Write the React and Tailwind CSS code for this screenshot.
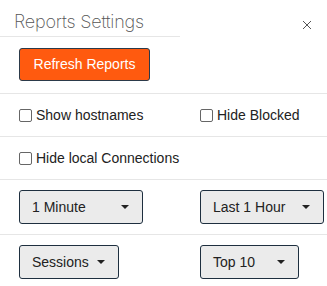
import React, { useState } from "react";

const Caret = () => (
  <svg width="10" height="6" viewBox="0 0 10 6" className="ml-auto">
    <path d="M1 1h8L5 5z" fill="#222" />
  </svg>
);

const Dropdown = ({ label, width }) => (
  <button
    className={`flex items-center h-[34px] px-[12px] bg-[#ebebeb] border border-[#1e2f3f] rounded-[3px] text-[14px] text-[#222] ${width}`}
  >
    <span>{label}</span>
    <Caret />
  </button>
);

const Check = ({ label, checked, onChange }) => (
  <label className="flex items-center gap-[4px] text-[14px] text-[#222]">
    <input
      type="checkbox"
      checked={checked}
      onChange={onChange}
      className="appearance-none w-[13px] h-[13px] border border-[#666] rounded-[2px] bg-white"
    />
    <span>{label}</span>
  </label>
);

const App = () => {
  const [opts, setOpts] = useState({ hostnames: false, blocked: false, local: false });
  const toggle = (key) => setOpts((prev) => ({ ...prev, [key]: !prev[key] }));

  return (
    <div className="w-[327px] h-[286px] bg-white overflow-hidden" style={{ fontFamily: "'Liberation Sans', Arial, sans-serif" }}>
      {/* Header */}
      <div className="flex items-start justify-between">
        <div className="w-[180px] h-[37px] border-b border-[#e6e6e6] pl-[14px] pt-[11px]">
          <h2 className="text-[18px] leading-[22px] font-extralight text-[#555] tracking-[-0.2px]" style={{ fontFamily: "Inter, sans-serif" }}>
            Reports Settings
          </h2>
        </div>
        <button className="mt-[19px] mr-[14px] w-[12px] h-[12px] flex items-center justify-center">
          <svg width="10" height="10" viewBox="0 0 10 10">
            <path d="M1 1l8 8M9 1l-8 8" stroke="#555" strokeWidth="1" />
          </svg>
        </button>
      </div>

      {/* Refresh */}
      <div className="h-[56px] pl-[19px] pt-[11px]">
        <button className="w-[131px] h-[33px] bg-[#ff5a0f] border border-[#2b3a4a] rounded-[3px] text-white text-[14px]">
          Refresh Reports
        </button>
      </div>

      <div className="flex items-center h-[43px] border-t border-[#e6e6e6] pl-[19px]">
        <div className="w-[181px]">
          <Check label="Show hostnames" checked={opts.hostnames} onChange={() => toggle("hostnames")} />
        </div>
        <Check label="Hide Blocked" checked={opts.blocked} onChange={() => toggle("blocked")} />
      </div>

      <div className="flex items-center h-[43px] border-t border-[#e6e6e6] pl-[19px]">
        <Check label="Hide local Connections" checked={opts.local} onChange={() => toggle("local")} />
      </div>

      <div className="flex items-center h-[55px] border-t border-[#e6e6e6] pl-[19px]">
        <div className="w-[181px]">
          <Dropdown label="1 Minute" width="w-[124px]" />
        </div>
        <Dropdown label="Last 1 Hour" width="w-[124px]" />
      </div>

      <div className="flex items-center h-[55px] border-t border-[#e6e6e6] pl-[19px]">
        <div className="w-[181px]">
          <Dropdown label="Sessions" width="w-[100px]" />
        </div>
        <Dropdown label="Top 10" width="w-[99px]" />
      </div>
    </div>
  );
};

export default App;
